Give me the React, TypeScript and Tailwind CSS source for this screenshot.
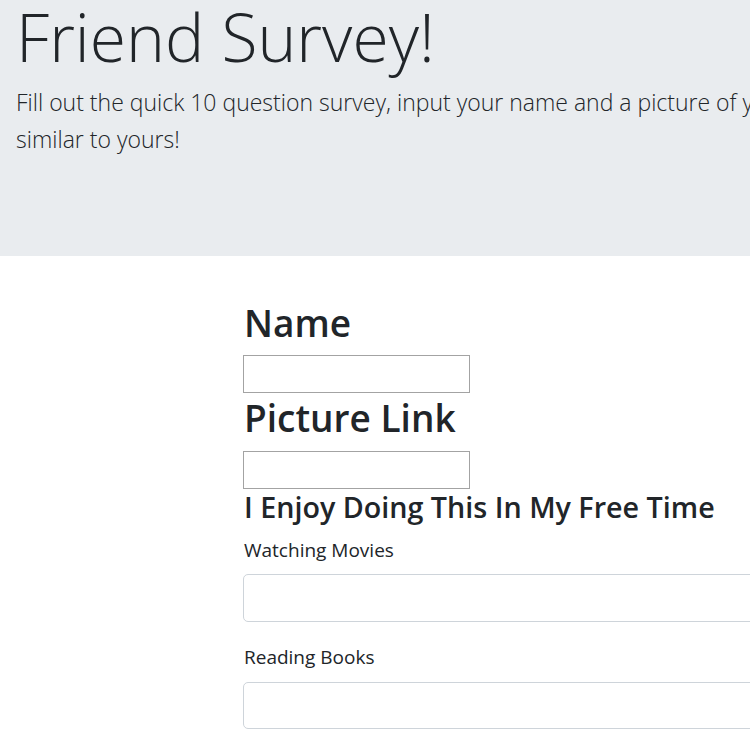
export default function App() {
  const font = { fontFamily: "'Segoe UI', 'Open Sans', 'Liberation Sans', sans-serif" };
  return (
    <div className="w-[750px] h-[750px] overflow-hidden bg-white text-[#212529]" style={font}>
      <div className="flex h-[256px] flex-col bg-[#e9ecef] px-4">
        <h1 className="-mt-[4px] whitespace-nowrap text-[66px] font-light leading-[80px]">Friend Survey!</h1>
        <p className="mt-[8px] whitespace-nowrap text-[23px] font-light leading-[37px]">
          Fill out the quick 10 question survey, input your name and a picture of yourself and we'll find the friend most
          <br />
          similar to yours!
        </p>
      </div>

      <form className="ml-[243px] w-[600px] pt-[44px]">
        <h2 className="pl-[1px] text-[37px] font-semibold leading-[45px]">Name</h2>
        <input type="text" className="mt-[10px] block h-[38px] w-[227px] border border-[#a3a3a3] bg-white" />
        <h2 className="mt-[2px] pl-[1px] text-[37px] font-semibold leading-[45px]">Picture Link</h2>
        <input type="text" className="mt-[11px] block h-[38px] w-[227px] border border-[#a3a3a3] bg-white" />
        <h4 className="pl-[1px] text-[28.7px] font-semibold leading-[36px]">I Enjoy Doing This In My Free Time</h4>

        <div className="mt-[10px]">
          <label className="block pl-[1px] text-[19px] leading-[30px]">Watching Movies</label>
          <input type="text" className="mt-[9px] block h-[48px] w-full rounded-[5px] border border-[#ced4da] bg-white" />
        </div>
        <div className="mt-[20px]">
          <label className="block pl-[1px] text-[19px] leading-[30px]">Reading Books</label>
          <input type="text" className="mt-[10px] block h-[47px] w-full rounded-[5px] border border-[#ced4da] bg-white" />
        </div>
      </form>
    </div>
  );
}
